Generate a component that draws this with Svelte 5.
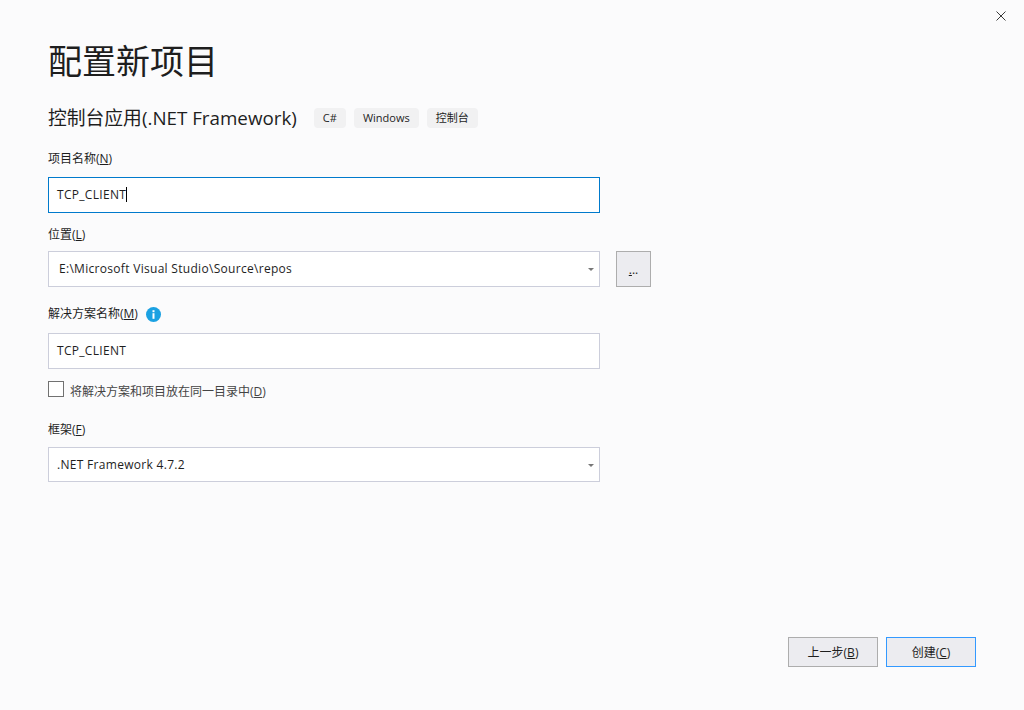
<script>
  // Visual Studio "configure new project" dialog, static
  const tags = ["C#", "Windows", "控制台"];
</script>

<div class="dialog">
  <button class="close" aria-label="关闭">
    <svg width="10" height="10" viewBox="0 0 10 10"><path d="M0.5 0.5 L9.5 9.5 M9.5 0.5 L0.5 9.5" stroke="#3a3a3a" stroke-width="1" fill="none" /></svg>
  </button>

  <h1>配置新项目</h1>

  <div class="sub">
    <h2>控制台应用(.NET Framework)</h2>
    <div class="tags">
      {#each tags as t}
        <span class="tag">{t}</span>
      {/each}
    </div>
  </div>

  <div class="label first">项目名称(<u>N</u>)</div>
  <div class="field focus nudge"><span>TCP_CLIENT</span><i class="caret"></i></div>

  <div class="label loc">位置(<u>L</u>)</div>
  <div class="loc-row">
    <div class="field combo pad nudge"><span>E:\Microsoft Visual Studio\Source\repos</span><i class="arrow"></i></div>
    <div class="browse"><span><u>.</u>..</span></div>
  </div>

  <div class="label sol">
    <span>解决方案名称(<u>M</u>)</span>
    <svg class="info" width="15" height="15" viewBox="0 0 15 15">
      <circle cx="7.5" cy="7.5" r="7.5" fill="#1ba1e2" />
      <rect x="6.5" y="6.2" width="2" height="5.6" fill="#fff" />
      <rect x="6.5" y="3.2" width="2" height="2" fill="#fff" />
    </svg>
  </div>
  <div class="field sol-field nudge"><span>TCP_CLIENT</span></div>

  <div class="check">
    <i class="box"></i>
    <span class="check-text">将解决方案和项目放在同一目录中(<u>D</u>)</span>
  </div>

  <div class="label fw">框架(<u>F</u>)</div>
  <div class="field combo short"><span>.NET Framework 4.7.2</span><i class="arrow"></i></div>

  <div class="actions">
    <div class="btn"><span>上一步(<u>B</u>)</span></div>
    <div class="btn primary"><span>创建(<u>C</u>)</span></div>
  </div>
</div>

<style>
  :global(body) { margin: 0; background: #fbfbfc; }
  .dialog {
    position: relative; box-sizing: border-box; width: 1024px; height: 710px; padding: 0 48px; overflow: hidden;
    display: flex; flex-direction: column; align-items: flex-start;
    font-family: "Open Sans", "Noto Sans CJK SC", sans-serif; font-size: 12px; color: #1e1e1e; background: #fbfbfc;
  }
  .close { position: absolute; top: 11px; right: 18px; width: 10px; height: 10px; padding: 0; border: 0; background: none; display: flex; }
  h1 { margin: 38px 0 0; font-size: 34px; line-height: 44px; font-weight: 400; font-family: "Noto Sans CJK SC", sans-serif; }
  .sub { display: flex; align-items: center; margin-top: 20px; height: 32px; }
  h2 { margin: 0; font-size: 18.8px; line-height: 32px; font-weight: 400; white-space: nowrap; }
  .tags { display: flex; gap: 8px; margin-left: 17px; }
  .tag { height: 20px; line-height: 20px; padding: 0 9px; background: #f1f1f2; border-radius: 4px; font-size: 11px; }
  .label { line-height: 16px; height: 16px; }
  .label u, .btn u, .check u { text-underline-offset: 1px; }
  .first { margin-top: 17px; }
  .loc { margin-top: 14px; }
  .sol { margin-top: 19px; display: flex; align-items: center; gap: 8px; }
  .fw { margin-top: 25px; }
  .field {
    box-sizing: border-box; position: relative; width: 552px; height: 36px; margin-top: 10px; padding: 0 8px;
    display: flex; align-items: center; background: #fff; border: 1px solid #cccedb; flex: none; letter-spacing: 0.3px;
  }
  .field.focus { border-color: #007acc; }
  .nudge { padding-bottom: 2px; }
  .loc-row .field { margin-top: 8px; }
  .pad { padding-left: 10px; }
  .sol-field { margin-top: 11px; }
  .short { height: 35px; margin-top: 9px; }
  .caret { width: 1px; height: 15px; background: #000; }
  .arrow {
    position: absolute; right: 5px; top: 50%; margin-top: -1px; width: 0; height: 0;
    border-left: 3px solid transparent; border-right: 3px solid transparent; border-top: 3px solid #777;
  }
  .loc-row { display: flex; gap: 16px; align-items: flex-start; }
  .browse {
    box-sizing: border-box; width: 35px; height: 36px; margin-top: 8px; display: flex; align-items: center; justify-content: center;
    background: #ececf0; border: 1px solid #adadad;
  }
  .check { display: flex; align-items: center; gap: 6px; margin-top: 12px; height: 16px; color: #444; }
  .check-text { padding-top: 4px; }
  .box { box-sizing: border-box; width: 16px; height: 16px; background: #fff; border: 1px solid #717171; }
  .actions { position: absolute; right: 48px; bottom: 43px; display: flex; gap: 8px; }
  .btn {
    box-sizing: border-box; width: 90px; height: 30px; display: flex; align-items: center; justify-content: center;
    background: #ececf0; border: 1px solid #adadad;
  }
  .btn.primary { border-color: #3399ff; }
</style>
